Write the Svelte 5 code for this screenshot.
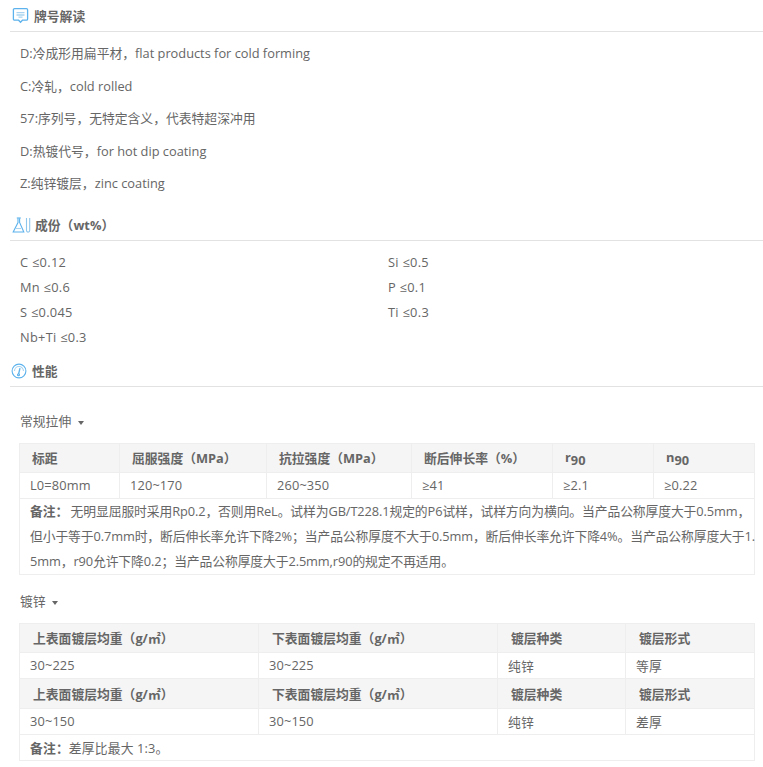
<script>
    const marks = [
        "D:冷成形用扁平材，flat products for cold forming",
        "C:冷轧，cold rolled",
        "57:序列号，无特定含义，代表特超深冲用",
        "D:热镀代号，for hot dip coating",
        "Z:纯锌镀层，zinc coating"
    ];
    const comps = ["C ≤0.12", "Si ≤0.5", "Mn ≤0.6", "P ≤0.1", "S ≤0.045", "Ti ≤0.3", "Nb+Ti ≤0.3"];
    const zincHead = ["上表面镀层均重（g/㎡）", "下表面镀层均重（g/㎡）", "镀层种类", "镀层形式"];
    const zincRows = [
        ["30~225", "30~225", "纯锌", "等厚"],
        ["30~150", "30~150", "纯锌", "差厚"]
    ];
</script>

<main>
    <h3 class="title first">
        <svg width="18" height="18" viewBox="0 0 18 18" fill="none" stroke="#5cb2ec" stroke-width="1.3">
            <path d="M2.6 2.6h11.8a1.2 1.2 0 0 1 1.2 1.2v9.2a1.2 1.2 0 0 1-1.2 1.2h-4L8.5 16.2l-1.9-2H2.6A1.2 1.2 0 0 1 1.4 13V3.8a1.2 1.2 0 0 1 1.2-1.2z"/>
            <path d="M4.500 6.600h8M4.500 9h8M6.500 11.200h4" stroke="#a9d3f0"/>
        </svg>
        牌号解读
    </h3>
    <div class="marks">
        {#each marks as m}
            <p>{m}</p>
        {/each}
    </div>

    <h3 class="title second">
        <svg width="20" height="18" viewBox="0 0 20 18" fill="none" stroke="#5cb2ec" stroke-width="1.1">
            <path d="M7 2.200v4.300L2.200 16h10.600L8.600 6.500V2.200"/>
            <path d="M5.800 2h4" />
            <path d="M15.500 2v12.500a1.600 1.600 0 0 0 3.200 0V2" stroke="#8fc6ec"/>
            <path d="M5 12.500h5" stroke="#a9d3f0"/>
        </svg>
        成份（wt%）
    </h3>
    <div class="comps">
        {#each comps as c}
            <div>{c}</div>
        {/each}
    </div>

    <h3 class="title third">
        <svg width="16" height="16" viewBox="0 0 16 16" fill="none" stroke="#5cb2ec" stroke-width="1.1">
            <circle cx="8" cy="8" r="6.900"/>
            <path d="M7.600 11 9 5.200" stroke-width="1.300"/>
            <circle cx="7.500" cy="11.800" r="1"/>
            <path d="M3.500 8a4.500 4.500 0 0 1 9 0" stroke="#a9d3f0"/>
        </svg>
        性能
    </h3>

    <div class="sub tensile">常规拉伸 <i class="caret"></i></div>
    <table class="t1">
        <colgroup>
            <col class="a1" /><col class="a2" /><col class="a3" /><col class="a4" /><col class="a5" /><col />
        </colgroup>
        <tbody>
            <tr class="head">
                <th>标距</th><th>屈服强度（MPa）</th><th>抗拉强度（MPa）</th><th>断后伸长率（%）</th>
                <th>r<sub>90</sub></th><th>n<sub>90</sub></th>
            </tr>
            <tr>
                <td>L0=80mm</td><td>120~170</td><td>260~350</td><td>≥41</td><td>≥2.1</td><td>≥0.22</td>
            </tr>
            <tr>
                <td colspan="6" class="note"><b>备注：</b>无明显屈服时采用Rp0.2，否则用ReL。试样为GB/T228.1规定的P6试样，试样方向为横向。当产品公称厚度大于0.5mm，<br />但小于等于0.7mm时，断后伸长率允许下降2%；当产品公称厚度不大于0.5mm，断后伸长率允许下降4%。当产品公称厚度大于1.<br />5mm，r90允许下降0.2；当产品公称厚度大于2.5mm,r90的规定不再适用。</td>
            </tr>
        </tbody>
    </table>

    <div class="sub zinc">镀锌 <i class="caret"></i></div>
    <table class="t2">
        <colgroup>
            <col class="b1" /><col class="b2" /><col class="b3" /><col />
        </colgroup>
        <tbody>
            {#each zincRows as row}
                <tr class="head">
                    {#each zincHead as h}
                        <th>{h}</th>
                    {/each}
                </tr>
                <tr>
                    {#each row as cell}
                        <td>{cell}</td>
                    {/each}
                </tr>
            {/each}
            <tr>
                <td colspan="4"><b>备注：</b>差厚比最大 1:3。</td>
            </tr>
        </tbody>
    </table>
</main>

<style>
    :global(body) {
        background: #fff;
    }

    main {
        width: 763px;
        height: 767px;
        overflow: hidden;
        box-sizing: border-box;
        font-family: "Open Sans", "Noto Sans CJK SC", sans-serif;
        font-size: 12.8px;
        color: #666;
    }

    .title {
        display: flex;
        align-items: center;
        gap: 4px;
        margin: 0 0 0 10px;
        padding-left: 2px;
        border-bottom: 1px solid #e2e2e2;
        font-size: 12.8px;
        font-weight: 700;
        color: #666;
    }

    .first {
        height: 30px;
        padding-bottom: 1px;
    }

    .second {
        height: 30px;
        margin-top: 10px;
        padding-left: 1px;
    }

    .third {
        height: 30px;
        margin-top: 6px;
        padding-left: 1px;
        gap: 5px;
    }

    .marks {
        padding-left: 20px;
        padding-top: 5px;
    }

    .marks p {
        margin: 0;
        height: 32.5px;
        line-height: 32.5px;
    }

    .comps {
        display: grid;
        grid-template-columns: 368px 1fr;
        grid-auto-rows: 25px;
        line-height: 25px;
        padding: 9px 0 0 20px;
        letter-spacing: 0.3px;
    }

    .sub {
        height: 20px;
        line-height: 20px;
        padding-left: 20px;
    }

    .tensile {
        margin-top: 24px;
    }

    .zinc {
        margin-top: 16px;
    }

    .caret {
        display: inline-block;
        width: 0;
        height: 0;
        margin-left: 3px;
        vertical-align: 1px;
        border: 3.5px solid transparent;
        border-top: 4px solid #666;
        border-bottom: 0;
    }

    table {
        width: 736px;
        margin-left: 19px;
        border-collapse: collapse;
        table-layout: fixed;
    }

    .t1 {
        margin-top: 12px;
    }

    .t2 {
        margin-top: 12px;
    }

    .a1 { width: 100px; }
    .a2 { width: 147px; }
    .a3 { width: 145px; }
    .a4 { width: 141px; }
    .a5 { width: 101px; }
    .b1 { width: 239px; }
    .b2 { width: 239px; }
    .b3 { width: 128px; }

    th,
    td {
        border: 1px solid #eee;
        padding: 0 10px;
        text-align: left;
        font-size: 12.8px;
        color: #666;
    }

    th {
        height: 28px;
        padding-left: 13px;
        background: #f5f5f5;
        font-weight: 700;
    }

    .t1 th {
        padding-left: 12px;
    }

    .t2 tr:nth-child(3) th {
        height: 29px;
    }

    td {
        height: 25px;
        letter-spacing: 0.15px;
    }

    sub {
        font-size: 12.8px;
        vertical-align: -3px;
        line-height: 1;
    }

    .note {
        line-height: 25px;
        padding-right: 0;
        white-space: nowrap;
        letter-spacing: -0.1px;
    }

    .note b {
        padding-right: 2.5px;
    }

    b {
        font-weight: 700;
    }
</style>
